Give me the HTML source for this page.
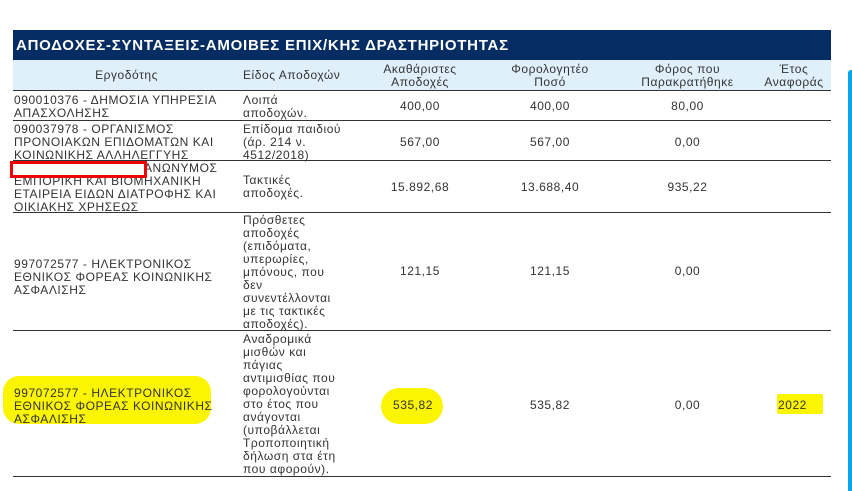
<!DOCTYPE html><html><head><meta charset="utf-8"><style>
body{margin:0;width:852px;height:491px;background:#fff;position:relative;overflow:hidden;font-family:"Liberation Sans","DejaVu Sans",sans-serif;color:#333;font-size:12px;letter-spacing:0.55px}
.a{position:absolute;line-height:13px;white-space:nowrap}
.c{text-align:center}
.hl{position:absolute;background:#fbf500;border-radius:14px}
.ln{position:absolute;left:13px;width:818px;height:1px;background:#333}
</style></head><body>
<div style="position:absolute;left:13px;top:30px;width:818px;height:30px;background:#052d63"></div>
<div class="a" style="left:16px;top:37px;color:#fff;font-weight:bold;font-size:15px;letter-spacing:0.75px;line-height:17px">ΑΠΟΔΟΧΕΣ-ΣΥΝΤΑΞΕΙΣ-ΑΜΟΙΒΕΣ ΕΠΙΧ/ΚΗΣ ΔΡΑΣΤΗΡΙΟΤΗΤΑΣ</div>
<div style="position:absolute;left:13px;top:60px;width:818px;height:30px;background:#dff0fb"></div>
<div style="position:absolute;left:848px;top:70px;width:4px;height:421px;background:#0aa6ec;border-radius:3px 0 0 0"></div>
<div class="ln" style="top:90px"></div><div class="ln" style="top:120px"></div><div class="ln" style="top:160px"></div><div class="ln" style="top:212px"></div><div class="ln" style="top:330px"></div><div class="ln" style="top:476px"></div>
<div class="a c" style="left:13px;width:227px;top:69px">Εργοδότης</div>
<div class="a" style="left:243px;top:69px">Είδος Αποδοχών</div>
<div class="a c" style="left:355px;width:130px;top:63px">Ακαθάριστες<br>Αποδοχές</div>
<div class="a c" style="left:485px;width:130px;top:63px">Φορολογητέο<br>Ποσό</div>
<div class="a c" style="left:615px;width:145px;top:63px">Φόρος που<br>Παρακρατήθηκε</div>
<div class="a c" style="left:758px;width:72px;top:63px">Έτος<br>Αναφοράς</div>

<div class="a" style="left:14px;top:94px">090010376 - ΔΗΜΟΣΙΑ ΥΠΗΡΕΣΙΑ<br>ΑΠΑΣΧΟΛΗΣΗΣ</div>
<div class="a" style="left:243px;top:94px">Λοιπά<br>αποδοχών.</div>
<div class="a c" style="left:355px;width:130px;top:100px">400,00</div>
<div class="a c" style="left:485px;width:130px;top:100px">400,00</div>
<div class="a c" style="left:615px;width:145px;top:100px">80,00</div>

<div class="a" style="left:14px;top:123px">090037978 - ΟΡΓΑΝΙΣΜΟΣ<br>ΠΡΟΝΟΙΑΚΩΝ ΕΠΙΔΟΜΑΤΩΝ ΚΑΙ<br>ΚΟΙΝΩΝΙΚΗΣ ΑΛΛΗΛΕΓΓΥΗΣ</div>
<div class="a" style="left:243px;top:123px">Επίδομα παιδιού<br>(άρ. 214 ν.<br>4512/2018)</div>
<div class="a c" style="left:355px;width:130px;top:136px">567,00</div>
<div class="a c" style="left:485px;width:130px;top:136px">567,00</div>
<div class="a c" style="left:615px;width:145px;top:136px">0,00</div>

<div class="a" style="left:14px;top:162px"><span style="display:inline-block;width:130px"></span>ΑΝΩΝΥΜΟΣ<br>ΕΜΠΟΡΙΚΗ ΚΑΙ ΒΙΟΜΗΧΑΝΙΚΗ<br>ΕΤΑΙΡΕΙΑ ΕΙΔΩΝ ΔΙΑΤΡΟΦΗΣ ΚΑΙ<br>ΟΙΚΙΑΚΗΣ ΧΡΗΣΕΩΣ</div>
<div style="position:absolute;left:10px;top:161px;width:131px;height:11px;border:3px solid #e00;background:#fff"></div>
<div class="a" style="left:243px;top:174px">Τακτικές<br>αποδοχές.</div>
<div class="a c" style="left:355px;width:130px;top:181px">15.892,68</div>
<div class="a c" style="left:485px;width:130px;top:181px">13.688,40</div>
<div class="a c" style="left:615px;width:145px;top:181px">935,22</div>

<div class="a" style="left:14px;top:258px">997072577 - ΗΛΕΚΤΡΟΝΙΚΟΣ<br>ΕΘΝΙΚΟΣ ΦΟΡΕΑΣ ΚΟΙΝΩΝΙΚΗΣ<br>ΑΣΦΑΛΙΣΗΣ</div>
<div class="a" style="left:243px;top:214px">Πρόσθετες<br>αποδοχές<br>(επιδόματα,<br>υπερωρίες,<br>μπόνους, που<br>δεν<br>συνεντέλλονται<br>με τις τακτικές<br>αποδοχές).</div>
<div class="a c" style="left:355px;width:130px;top:265px">121,15</div>
<div class="a c" style="left:485px;width:130px;top:265px">121,15</div>
<div class="a c" style="left:615px;width:145px;top:265px">0,00</div>

<div class="hl" style="left:3px;top:376px;width:208px;height:48px;border-radius:16px"></div>
<div class="hl" style="left:381px;top:388px;width:62px;height:36px;border-radius:18px"></div>
<div class="hl" style="left:777px;top:394px;width:46px;height:20px;border-radius:2px"></div>
<div class="a" style="left:14px;top:387px">997072577 - ΗΛΕΚΤΡΟΝΙΚΟΣ<br>ΕΘΝΙΚΟΣ ΦΟΡΕΑΣ ΚΟΙΝΩΝΙΚΗΣ<br>ΑΣΦΑΛΙΣΗΣ</div>
<div class="a" style="left:243px;top:333px">Αναδρομικά<br>μισθών και<br>πάγιας<br>αντιμισθίας που<br>φορολογούνται<br>στο έτος που<br>ανάγονται<br>(υποβάλλεται<br>Τροποποιητική<br>δήλωση στα έτη<br>που αφορούν).</div>
<div class="a" style="left:393px;top:399px">535,82</div>
<div class="a c" style="left:485px;width:130px;top:399px">535,82</div>
<div class="a c" style="left:615px;width:145px;top:399px">0,00</div>
<div class="a" style="left:778px;top:399px">2022</div>
</body></html>
